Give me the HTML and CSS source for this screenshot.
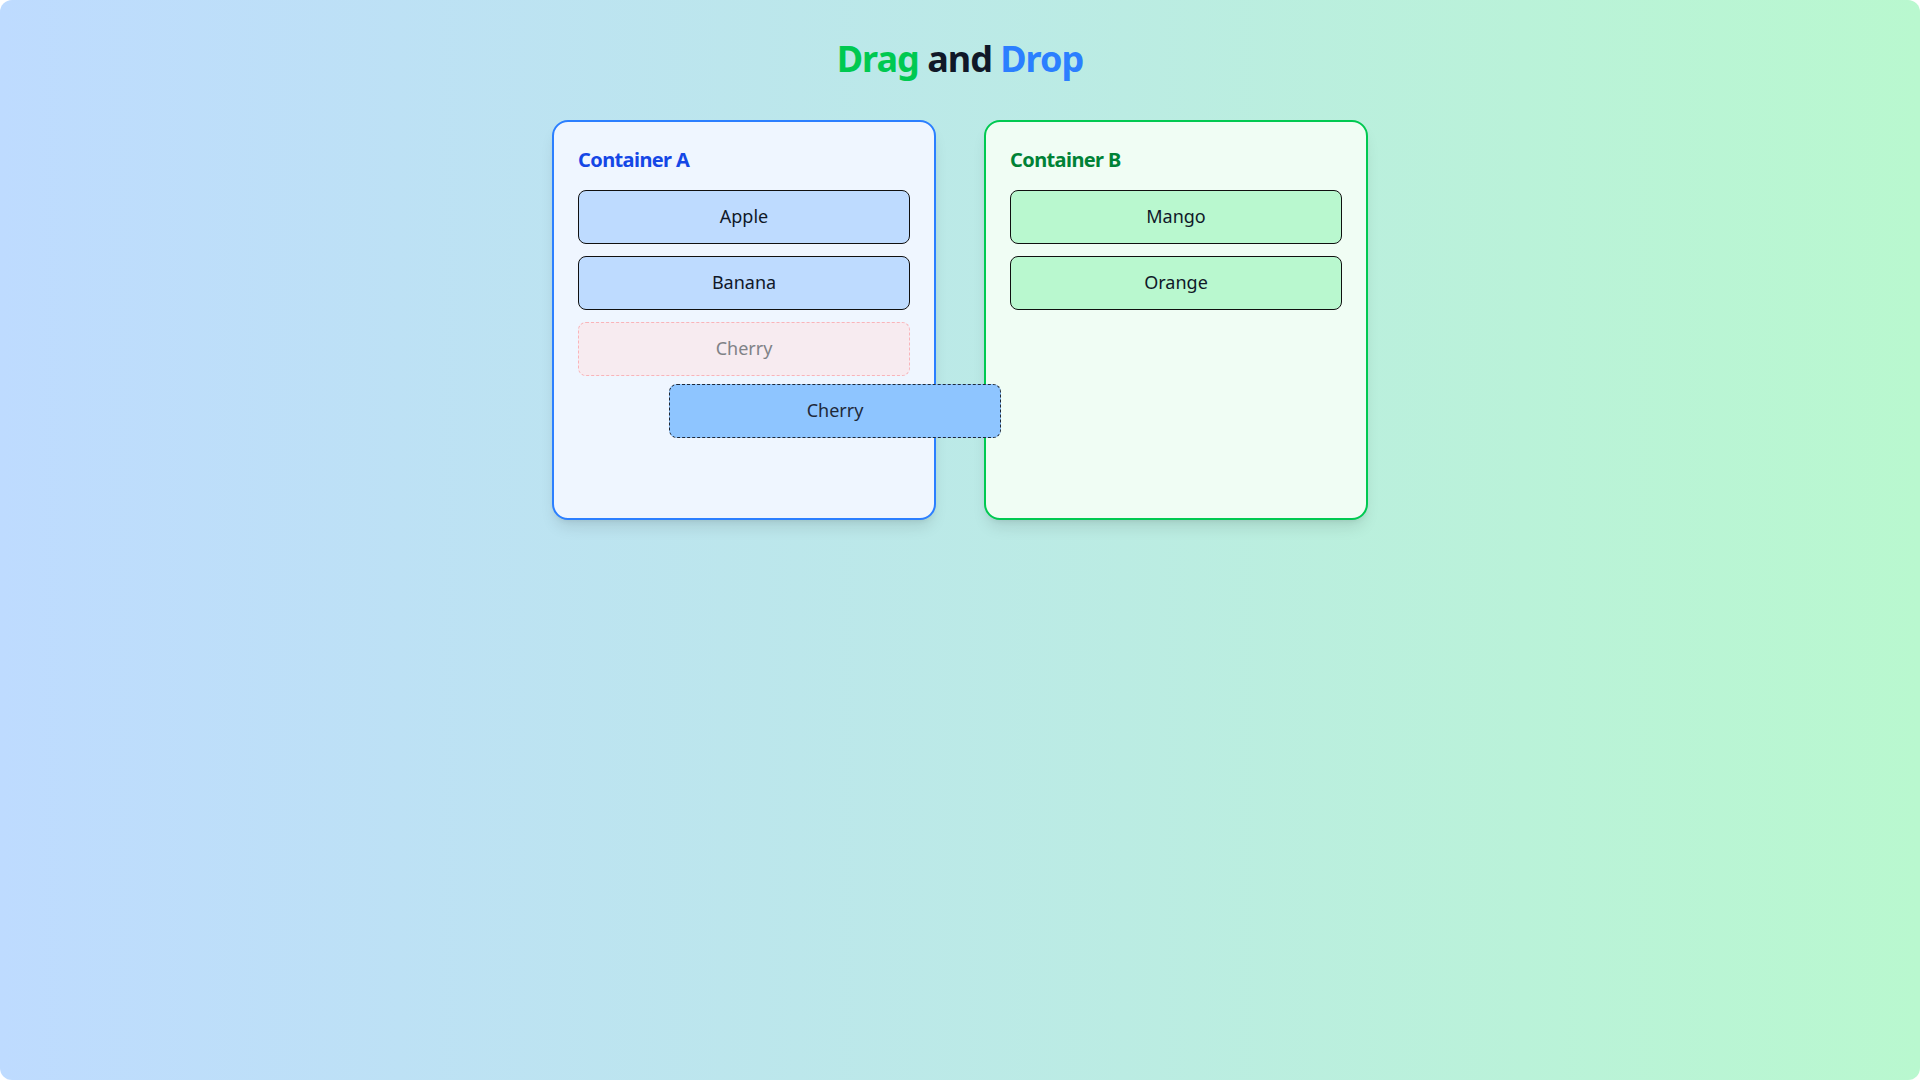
FILE: index.html
```html
<!DOCTYPE html>
<html lang="en">
<head>
<meta charset="utf-8">
<title>Drag and Drop</title>
<link rel="stylesheet" href="styles.css">
</head>
<body>
<div class="page">
  <h1 class="title"><span class="t-green">Drag</span> <span class="t-dark">and</span> <span class="t-blue">Drop</span></h1>
  <div class="board">
    <section class="box box-a">
      <h2 class="box-title">Container A</h2>
      <div class="item item-a">Apple</div>
      <div class="item item-a">Banana</div>
      <div class="item item-ghost">Cherry</div>
    </section>
    <section class="box box-b">
      <h2 class="box-title">Container B</h2>
      <div class="item item-b">Mango</div>
      <div class="item item-b">Orange</div>
    </section>
    <div class="item item-drag">Cherry</div>
  </div>
</div>
</body>
</html>
```
FILE: styles.css
```css
* { box-sizing: border-box; }
html, body { margin: 0; padding: 0; background: #ffffff; }
body { font-family: "Noto Sans", "Open Sans", sans-serif; color: #101828; }
.page {
  height: 1080px;
  border-radius: 12px;
  background: linear-gradient(to right, #bedbff, #b9f8cf);
  padding-top: 40px;
  display: flex;
  flex-direction: column;
  align-items: center;
}
.title {
  margin: 0 0 40px;
  font-size: 36px;
  line-height: 38px;
  padding-bottom: 2px;
  font-weight: 700;
  letter-spacing: -1px;
}
.t-green { color: #00c951; }
.t-dark { color: #101828; }
.t-blue { color: #2b7fff; }
.board {
  position: relative;
  display: flex;
  gap: 48px;
}
.box {
  width: 384px;
  height: 400px;
  padding: 24px;
  border: 2px solid;
  border-radius: 16px;
  box-shadow: 0 10px 15px -3px rgba(0,0,0,0.1), 0 4px 6px -4px rgba(0,0,0,0.1);
}
.box-a { background: #eff6ff; border-color: #2b7fff; }
.box-b { background: #f0fdf4; border-color: #00c951; }
.box-title {
  margin: 0 0 16px;
  font-size: 20px;
  line-height: 28px;
  font-weight: 700;
  letter-spacing: -0.6px;
}
.box-a .box-title { color: #1447e6; }
.box-b .box-title { color: #008236; }
.item {
  height: 54px;
  margin-bottom: 12px;
  padding-bottom: 2px;
  border: 1px solid #101010;
  border-radius: 8px;
  display: flex;
  align-items: center;
  justify-content: center;
  font-size: 18px;
  color: #101828;
}
.item-a { background: #bedbff; }
.item-b { background: #b9f8cf; }
.item-ghost {
  background: #f7ebf0;
  border: 1px dashed #f9b4b9;
  color: #808287;
}
.item-drag {
  position: absolute;
  left: 117px;
  top: 264px;
  width: 332px;
  margin: 0;
  background: #8ec5ff;
  border: 1px dashed #1e2939;
  color: #1e2939;
}
```
